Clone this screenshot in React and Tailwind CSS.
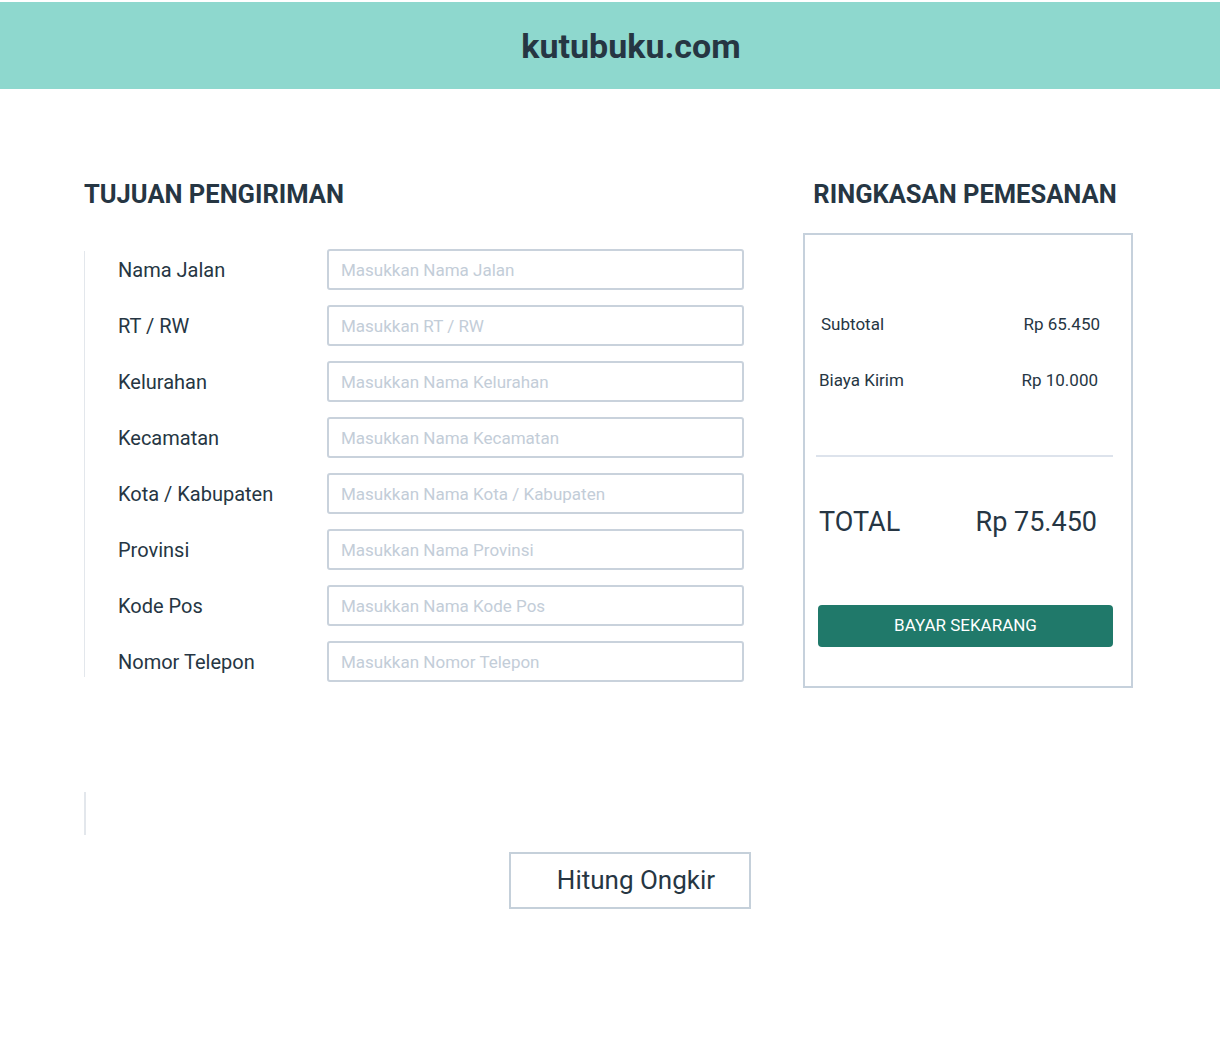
import React from "react";

const FIELDS = [
  { label: "Nama Jalan", placeholder: "Masukkan Nama Jalan" },
  { label: "RT / RW", placeholder: "Masukkan RT / RW" },
  { label: "Kelurahan", placeholder: "Masukkan Nama Kelurahan" },
  { label: "Kecamatan", placeholder: "Masukkan Nama Kecamatan" },
  { label: "Kota / Kabupaten", placeholder: "Masukkan Nama Kota / Kabupaten" },
  { label: "Provinsi", placeholder: "Masukkan Nama Provinsi" },
  { label: "Kode Pos", placeholder: "Masukkan Nama Kode Pos" },
  { label: "Nomor Telepon", placeholder: "Masukkan Nomor Telepon" },
];

function App() {
  return (
    <div className="min-h-screen bg-white text-[#263643] font-['Roboto',sans-serif]">

      {/* HEADER */}

      <div className="pt-[2px]">
        <div className="h-[87px] bg-[#8ed8ce] flex items-center justify-center">
          <h1 className="text-[34px] font-bold ml-[42px] mt-[2px]">kutubuku.com</h1>
        </div>
      </div>

      {/* CONTENT */}

      <div className="flex pl-[84px] pt-[88px]">

        {/* TUJUAN PENGIRIMAN */}

        <div className="w-[660px]">
          <h2 className="text-[25.5px] font-bold leading-8 mt-[1px]">TUJUAN PENGIRIMAN</h2>

          <div className="flex mt-[39px]">
            <div className="w-[2px] bg-[#e3e7ec] mt-[2px] mb-[5px]" />
            <div className="flex flex-col gap-[15px] pl-[32px]">
              {FIELDS.map((f) => (
                <div key={f.label} className="flex items-center h-[41px]">
                  <label className="w-[210px] text-[20px] pl-[1px]">{f.label}</label>
                  <input
                    placeholder={f.placeholder}
                    className="w-[417px] h-[41px] border-2 border-[#c9d2dc] rounded-[3px] px-[12px] text-[17px] placeholder:text-[#c3cdd8] outline-none"
                  />
                </div>
              ))}
            </div>
          </div>

          <div className="w-[2px] h-[43px] bg-[#e3e7ec] mt-[110px]" />

          <div className="mt-[17px] ml-[425px]">
            <button className="w-[242px] h-[57px] border-2 border-[#c5d0da] text-[26px] pl-[12px]">
              Hitung Ongkir
            </button>
          </div>
        </div>

        {/* RINGKASAN PEMESANAN */}

        <div className="ml-[59px] w-[330px]">
          <h2 className="text-[25.5px] font-bold leading-8 mt-[1px] text-center -ml-[6px]">RINGKASAN PEMESANAN</h2>

          <div className="mt-[23px] h-[455px] border-2 border-[#c6d1dc]">
            <div className="flex justify-between items-center h-[24px] mt-[78px] ml-[16px] mr-[31px] text-[17px]">
              <span>Subtotal</span>
              <span>Rp 65.450</span>
            </div>
            <div className="flex justify-between items-center h-[24px] mt-[32px] ml-[14px] mr-[33px] text-[17px]">
              <span>Biaya Kirim</span>
              <span>Rp 10.000</span>
            </div>

            <div className="h-[2px] bg-[#dde3ec] mt-[62px] ml-[11px] mr-[18px]" />

            <div className="flex justify-between items-center h-[34px] mt-[48px] ml-[14px] mr-[34px] text-[27px]">
              <span>TOTAL</span>
              <span>Rp 75.450</span>
            </div>

            <button className="w-[295px] h-[42px] mt-[66px] ml-[13px] rounded-[4px] bg-[#20796a] text-white text-[17px]">
              BAYAR SEKARANG
            </button>
          </div>
        </div>

      </div>
    </div>
  );
}

export default App;
